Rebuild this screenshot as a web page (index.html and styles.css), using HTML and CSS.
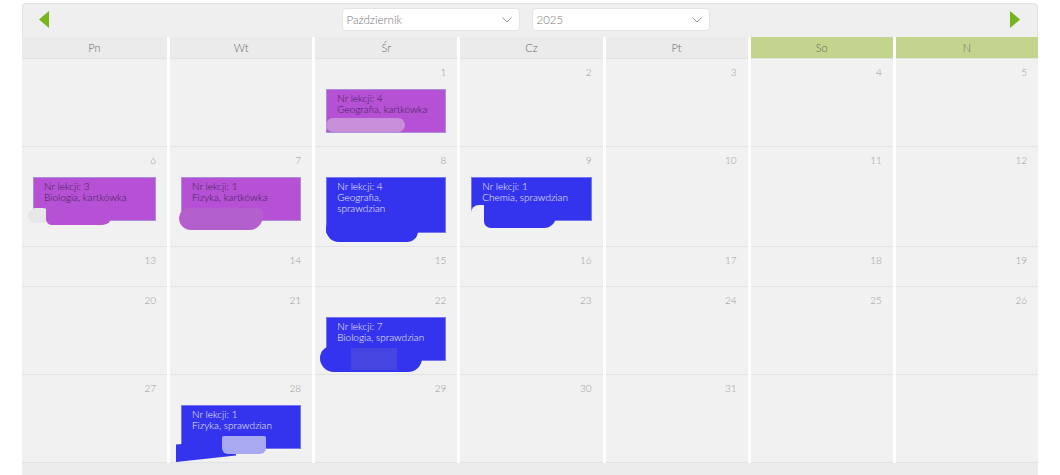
FILE: index.html
```html
<!DOCTYPE html>
<html lang="pl">
<head>
<meta charset="utf-8">
<link rel="stylesheet" href="styles.css">
</head>
<body>
<div class="cal">
  <div class="toolbar">
    <svg class="arrow" width="10" height="17" viewBox="0 0 10 17"><polygon points="10,0 10,17 0,8.5" fill="#76b51c"/></svg>
    <div class="selects">
      <div class="select month"><span>Październik</span><svg width="10" height="6" viewBox="0 0 10 6"><polyline points="0.5,0.5 5,5 9.5,0.5" fill="none" stroke="#999" stroke-width="1"/></svg></div>
      <div class="select year"><span>2025</span><svg width="10" height="6" viewBox="0 0 10 6"><polyline points="0.5,0.5 5,5 9.5,0.5" fill="none" stroke="#999" stroke-width="1"/></svg></div>
    </div>
    <svg class="arrow" width="10" height="17" viewBox="0 0 10 17"><polygon points="0,0 0,17 10,8.5" fill="#76b51c"/></svg>
  </div>
  <div class="grid">
    <div class="hd">Pn</div><div class="hd">Wt</div><div class="hd">Śr</div><div class="hd">Cz</div><div class="hd">Pt</div><div class="hd we">So</div><div class="hd we">N</div>

    <div class="cell"></div>
    <div class="cell"></div>
    <div class="cell"><div class="num">1</div>
      <div class="ev purple"><div>Nr lekcji: 4</div><div>Geografia, kartkówka</div>
        <span class="mark m1"></span></div></div>
    <div class="cell"><div class="num">2</div></div>
    <div class="cell"><div class="num">3</div></div>
    <div class="cell"><div class="num">4</div></div>
    <div class="cell"><div class="num">5</div></div>

    <div class="cell"><div class="num">6</div>
      <div class="ev purple"><div>Nr lekcji: 3</div><div>Biologia, kartkówka</div>
        <span class="mark m2a"></span><span class="mark m2b"></span></div></div>
    <div class="cell"><div class="num">7</div>
      <div class="ev purple"><div>Nr lekcji: 1</div><div>Fizyka, kartkówka</div>
        <span class="mark m3"></span></div></div>
    <div class="cell"><div class="num">8</div>
      <div class="ev blue tall"><div>Nr lekcji: 4</div><div>Geografia,</div><div>sprawdzian</div>
        <span class="mark m4"></span></div></div>
    <div class="cell"><div class="num">9</div>
      <div class="ev blue"><div>Nr lekcji: 1</div><div>Chemia, sprawdzian</div>
        <span class="mark m5a"></span><span class="mark m5b"></span></div></div>
    <div class="cell"><div class="num">10</div></div>
    <div class="cell"><div class="num">11</div></div>
    <div class="cell"><div class="num">12</div></div>

    <div class="cell short"><div class="num">13</div></div>
    <div class="cell short"><div class="num">14</div></div>
    <div class="cell short"><div class="num">15</div></div>
    <div class="cell short"><div class="num">16</div></div>
    <div class="cell short"><div class="num">17</div></div>
    <div class="cell short"><div class="num">18</div></div>
    <div class="cell short"><div class="num">19</div></div>

    <div class="cell"><div class="num">20</div></div>
    <div class="cell"><div class="num">21</div></div>
    <div class="cell"><div class="num">22</div>
      <div class="ev blue"><div>Nr lekcji: 7</div><div>Biologia, sprawdzian</div>
        <span class="mark m6a"></span><span class="mark m6b"></span></div></div>
    <div class="cell"><div class="num">23</div></div>
    <div class="cell"><div class="num">24</div></div>
    <div class="cell"><div class="num">25</div></div>
    <div class="cell"><div class="num">26</div></div>

    <div class="cell"><div class="num">27</div></div>
    <div class="cell"><div class="num">28</div>
      <div class="ev blue"><div>Nr lekcji: 1</div><div>Fizyka, sprawdzian</div>
        <span class="mark m7a"></span><span class="mark m7b"></span></div></div>
    <div class="cell"><div class="num">29</div></div>
    <div class="cell"><div class="num">30</div></div>
    <div class="cell"><div class="num">31</div></div>
    <div class="cell"></div>
    <div class="cell"></div>
  </div>
  <div class="footer"></div>
</div>
</body>
</html>
```
FILE: styles.css
```css
* { box-sizing: border-box; }
html, body { margin: 0; padding: 0; background: #fff; }
body {
  font-family: Lato, "Open Sans", sans-serif;
  font-weight: 300;
  color: #666;
  height: 475px;
  overflow: hidden;
}
.cal {
  margin: 3px 0 0 22px;
  width: 1016px;
  background: #fff;
}
.toolbar {
  height: 34px;
  background: #efefef;
  border: 1px solid #e2e2e2;
  border-bottom: none;
  border-radius: 4px 4px 0 0;
  display: flex;
  align-items: center;
  justify-content: space-between;
  padding: 0 17px 2px 16px;
}
.arrow { display: block; }
.selects { display: flex; gap: 12px; margin-left: -8px; }
.select {
  width: 178px;
  height: 23px;
  background: #fff;
  border: 1px solid #e4e4e4;
  border-radius: 4px;
  display: flex;
  align-items: center;
  justify-content: space-between;
  padding: 0 7px 0 4px;
  font-size: 11.5px;
  color: #777;
}
.grid {
  display: grid;
  grid-template-columns: 145px repeat(6, 1fr);
  column-gap: 3px;
  background: #fff;
}
.hd {
  height: 22px;
  background: #ebebeb;
  font-size: 11px;
  color: #6a6a6a;
  text-align: center;
  line-height: 21px;
  border-bottom: 1px solid #e2e2e2;
}
.hd.we { background: #c3d58c; color: #666; }
.cell {
  background: #f1f1f1;
  border-bottom: 1px solid #e3e3e3;
  padding: 0 11px 13px 11px;
  min-height: 88px;
}
.cell.short { min-height: 40px; padding-bottom: 9px; }
.num {
  height: 30px;
  line-height: 27px;
  text-align: right;
  font-size: 10px;
  color: #9a9a9a;
}
.ev {
  position: relative;
  height: 44px;
  padding: 3px 8px 0 10px;
  font-size: 10px;
  line-height: 11px;
}
.ev.tall { height: 56px; }
.ev.purple { background: #b650d5; color: #3a2050; border: 1px solid #a98fd8; }
.ev.blue { background: #3434ee; color: #f2f2ff; border: 1px solid #7777f0; }
.mark { position: absolute; display: block; }
.m1 { left: -1px; top: 28px; width: 79px; height: 14px; border-radius: 7px; background: #c78fd9; }
.m2a { left: -6px; top: 30px; width: 22px; height: 15px; border-radius: 8px; background: #e7e7e7; }
.m2b { left: 12px; top: 30px; width: 66px; height: 17px; border-radius: 0 8px 10px 6px; background: #b650d5; }
.m3 { left: -3px; top: 30px; width: 84px; height: 22px; border-radius: 10px 6px 14px 12px; background: #b460cc; }
.m4 { left: -1px; top: 40px; width: 92px; height: 24px; border-radius: 12px 4px 12px 14px; background: #3434ee; }
.m5a { left: -1px; top: 27px; width: 13px; height: 17px; border-radius: 8px 0 0 0; background: #f1f1f1; }
.m5b { left: 12px; top: 38px; width: 72px; height: 12px; border-radius: 0 0 14px 8px; background: #3434ee; }
.m6a { left: -7px; top: 28px; width: 102px; height: 26px; border-radius: 12px 6px 14px 14px; background: #3434ee; }
.m6b { left: 24px; top: 30px; width: 46px; height: 22px; background: #4545e2; }
.m7a { left: -6px; top: 34px; width: 60px; height: 22px; background: #3434ee; clip-path: polygon(0 20%, 100% 0, 100% 70%, 0 100%); }
.m7b { left: 40px; top: 30px; width: 44px; height: 18px; border-radius: 2px 2px 6px 6px; background: #a9a9f2; }
.footer {
  height: 20px;
  background: #ececec;
}
```
